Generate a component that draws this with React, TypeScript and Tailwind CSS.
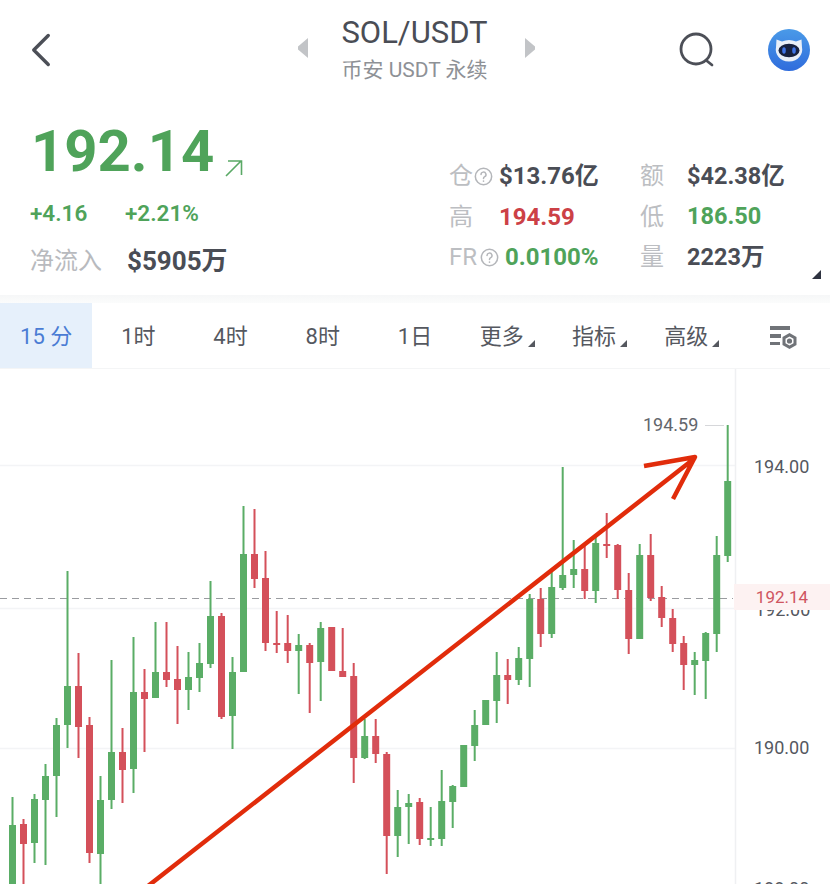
import { ChevronLeft } from "lucide-react";

type Candle = [number, number, number, number, number, "g" | "r"];

// x, wick top, wick bottom, body top, body bottom, colour (page coordinates)
const candles: Candle[] = [
  [12.5, 797, 890, 825, 890, "g"],
  [23.5, 819, 890, 824, 844, "r"],
  [34.5, 794, 863, 799, 843, "g"],
  [45.5, 764, 865, 776, 800, "g"],
  [56.5, 718, 817, 725, 776, "g"],
  [67.5, 571, 748, 686, 725, "g"],
  [78.5, 653, 758, 686, 727, "r"],
  [89.5, 717, 863, 725, 853, "r"],
  [100.5, 776, 890, 800, 854, "g"],
  [111.5, 660, 809, 752, 800, "g"],
  [122.5, 728, 803, 752, 770, "r"],
  [133.5, 637, 793, 692, 769, "g"],
  [144.5, 669, 752, 692, 699, "r"],
  [155.5, 622, 698, 672, 698, "g"],
  [166.5, 622, 687, 672, 680, "r"],
  [177.5, 646, 724, 679, 690, "r"],
  [188.5, 652, 710, 677, 690, "g"],
  [199.5, 643, 692, 663, 678, "g"],
  [210.5, 581, 668, 616, 664, "g"],
  [221.5, 613, 719, 616, 717, "r"],
  [232.5, 657, 749, 672, 716, "g"],
  [243.5, 506, 672, 554, 672, "g"],
  [254.5, 509, 588, 554, 579, "r"],
  [265.5, 551, 651, 578, 643, "r"],
  [276.7, 611, 653, 643, 645, "r"],
  [287.7, 615, 663, 643, 651, "r"],
  [298.7, 634, 694, 645, 651, "g"],
  [309.7, 643, 713, 645, 663, "r"],
  [320.7, 622, 701, 628, 662, "g"],
  [331.7, 627, 671, 627, 671, "r"],
  [342.7, 628, 677, 671, 677, "r"],
  [353.7, 663, 783, 676, 758, "r"],
  [364.7, 719, 759, 736, 758, "g"],
  [375.7, 719, 763, 736, 754, "r"],
  [386.7, 752, 874, 754, 836, "r"],
  [397.7, 790, 857, 807, 836, "g"],
  [408.7, 794, 844, 803, 807, "g"],
  [419.7, 798, 845, 802, 839, "r"],
  [430.7, 807, 846, 838, 840, "g"],
  [441.7, 770, 846, 801, 839, "g"],
  [452.7, 785, 828, 786, 802, "g"],
  [463.7, 745, 787, 745, 787, "g"],
  [474.7, 710, 761, 725, 746, "g"],
  [485.7, 700, 725, 700, 725, "g"],
  [496.7, 652, 723, 675, 701, "g"],
  [507.7, 659, 704, 675, 680, "r"],
  [518.7, 647, 685, 658, 680, "g"],
  [529.7, 594, 687, 599, 659, "g"],
  [540.7, 588, 647, 599, 634, "r"],
  [551.7, 572, 638, 587, 634, "g"],
  [562.7, 467, 590, 575, 588, "g"],
  [573.7, 540, 588, 569, 575, "g"],
  [584.7, 543, 599, 569, 591, "r"],
  [595.7, 537, 603, 543, 591, "g"],
  [606.7, 513, 558, 544, 546, "r"],
  [617.7, 544, 599, 545, 590, "r"],
  [628.7, 573, 654, 590, 639, "r"],
  [639.7, 544, 639, 555, 639, "g"],
  [650.7, 534, 601, 555, 598, "r"],
  [661.7, 586, 627, 597, 618, "r"],
  [672.7, 609, 652, 618, 644, "r"],
  [683.7, 636, 690, 643, 665, "r"],
  [694.7, 652, 695, 660, 665, "g"],
  [705.7, 632, 699, 633, 661, "g"],
  [716.7, 536, 652, 555, 634, "g"],
  [727.7, 425, 562, 481, 556, "g"],
];

const candleColors = { g: "#5aad66", r: "#d4505a" };

function HelpDot({ className }: { className?: string }) {
  return (
    <svg viewBox="0 0 20 20" className={className} fill="none" stroke="#b4b6ba" strokeWidth="1.6">
      <circle cx="10" cy="10" r="8.6" />
      <path d="M7.4 8a2.6 2.6 0 1 1 3.9 2.2c-.9.5-1.3 1-1.3 2" strokeLinecap="round" />
      <circle cx="10" cy="14.8" r=".9" fill="#b4b6ba" stroke="none" />
    </svg>
  );
}

function CornerTriangle({ className }: { className?: string }) {
  return (
    <svg viewBox="0 0 8 8" className={className}>
      <path d="M8 0v8H0z" fill="currentColor" />
    </svg>
  );
}

function StatRow({
  label,
  helpClass,
  value,
  valueClass,
  indent,
}: {
  label: string;
  helpClass?: string;
  value: string;
  valueClass: string;
  indent: string;
}) {
  return (
    <div className="flex h-[40.5px] items-center">
      <div className={`flex shrink-0 items-center ${indent}`}>
        <span className="text-[24px] leading-none text-[#bcbec2]">{label}</span>
        {helpClass && <HelpDot className={`h-[19px] w-[19px] ${helpClass}`} />}
      </div>
      <span className={`font-bold leading-none whitespace-nowrap ${valueClass}`}>{value}</span>
    </div>
  );
}

function ChartSvg() {
  return (
    <svg viewBox="0 369 830 515" className="block h-[515px] w-[830px]">
      <path d="M0 465.5H735M0 608.5H735M0 748.5H735" stroke="#f3f4f6" strokeWidth="1.5" />
      <path d="M735.5 369V884" stroke="#eff0f2" strokeWidth="1.5" />
      <path d="M0 598.5H733" stroke="#9a9ca0" strokeWidth="1" strokeDasharray="7 5" />
      <path d="M705 425.5H724" stroke="#d6d7da" strokeWidth="1" />
      {candles.map(([x, wickTop, wickBottom, bodyTop, bodyBottom, tone]) => (
        <g key={x} fill={candleColors[tone]}>
          <rect x={x - 1} y={wickTop} width="2" height={wickBottom - wickTop} />
          <rect x={x - 3.5} y={bodyTop} width="7" height={Math.max(bodyBottom - bodyTop, 2)} />
        </g>
      ))}
      <path
        d="M148 886 695 458M644 466 695 457 673 499"
        fill="none"
        stroke="#e12c0b"
        strokeWidth="4.5"
        strokeLinejoin="round"
      />
    </svg>
  );
}

const ranges = ["15 分", "1时", "4时", "8时", "1日"];
const menus = ["更多", "指标", "高级"];

export default function App() {
  return (
    <div className="h-[884px] w-[830px] overflow-hidden bg-white font-['Roboto','Noto_Sans_CJK_SC',sans-serif]">
      <header className="flex h-[100px] items-center px-[24px]">
        <div className="w-[270px]">
          <ChevronLeft size={58} strokeWidth={1.4} className="-ml-[12px] text-[#4c4f57]" />
        </div>
        <div className="flex flex-1 items-start justify-center pr-[2px] pb-[3px]">
          <svg viewBox="0 0 12 20" className="mt-[23px] h-[20px] w-[12px] text-[#c2c4c7]">
            <path d="M11 0v20L1 11.5v-3z" fill="currentColor" />
          </svg>
          <div className="mr-[34px] ml-[31px] flex w-[150px] flex-col items-center whitespace-nowrap">
            <span className="text-[31px] leading-[36px] text-[#4a4d55]">SOL/USDT</span>
            <span className="mt-[6px] text-[21px] leading-[26px] text-[#8e9196]">币安 USDT 永续</span>
          </div>
          <svg viewBox="0 0 12 20" className="mt-[23px] h-[20px] w-[12px] text-[#c2c4c7]">
            <path d="M1 0v20l10-8.5v-3z" fill="currentColor" />
          </svg>
        </div>
        <div className="-mr-[4px] flex w-[270px] items-center justify-end gap-[53px]">
          <svg viewBox="0 0 36 36" className="h-[36px] w-[36px]" fill="none" stroke="#4c4f57" strokeWidth="2.8">
            <circle cx="17" cy="17" r="15" />
            <path d="m28 29 5 4" strokeLinecap="round" />
          </svg>
          <svg viewBox="0 0 42 42" className="h-[42px] w-[42px]">
            <defs>
              <linearGradient id="avatar" x1="0" y1="0" x2="0" y2="1">
                <stop offset="0" stopColor="#4a9ae8" />
                <stop offset="1" stopColor="#2f6cdc" />
              </linearGradient>
            </defs>
            <circle cx="21" cy="21" r="21" fill="url(#avatar)" />
            <path
              d="M8.500 10.500 14 12.500a17 17 0 0 1 14 0l5.500-2 .5 8c1.500 6-3.500 14-13 14S6.500 24.500 8 18.500z"
              fill="#e9eff8"
            />
            <ellipse cx="21" cy="21.500" rx="10.500" ry="6.800" fill="#17213f" />
            <ellipse cx="16" cy="21.500" rx="1.800" ry="3.200" fill="#3f74e6" />
            <ellipse cx="26" cy="21.500" rx="1.800" ry="3.200" fill="#3f74e6" />
          </svg>
        </div>
      </header>

      <section className="relative flex h-[195px] pl-[30px]">
        <div className="w-[419px]">
          <div className="mt-[19px] flex items-end">
            <span className="pl-[1px] text-[58px] font-bold leading-[64px] text-[#4fa35a]">192.14</span>
            <svg viewBox="0 0 18 18" className="mb-[6px] ml-[11px] h-[18px] w-[18px]" fill="none" stroke="#5aa966" strokeWidth="1.600">
              <path d="M1 17 16 2M3 2h13.500v14" />
            </svg>
          </div>
          <div className="mt-[16px] flex h-[28px] items-center text-[22.5px] font-semibold leading-none text-[#4fa35a]">
            <span className="w-[95px]">+4.16</span>
            <span>+2.21%</span>
          </div>
          <div className="mt-[21px] flex items-center">
            <span className="w-[97px] text-[24px] leading-none text-[#b8babe]">净流入</span>
            <span className="text-[26px] font-bold leading-none text-[#4a4d55]">$5905万</span>
          </div>
        </div>
        <div className="mt-[56px] w-[191px] text-[24px]">
          <StatRow label="仓" helpClass="ml-[1px]" value="$13.76亿" valueClass="text-[#4a4d55]" indent="w-[50px]" />
          <StatRow label="高" value="194.59" valueClass="text-[#cc4146]" indent="w-[50px]" />
          <StatRow label="FR" helpClass="ml-[3px]" value="0.0100%" valueClass="text-[#4fa35a]" indent="w-[56px]" />
        </div>
        <div className="mt-[56px] w-[190px] text-[23.5px]">
          <StatRow label="额" value="$42.38亿" valueClass="text-[#4a4d55]" indent="w-[47px]" />
          <StatRow label="低" value="186.50" valueClass="text-[#4fa35a]" indent="w-[47px]" />
          <StatRow label="量" value="2223万" valueClass="text-[#4a4d55]" indent="w-[47px]" />
        </div>
        <CornerTriangle className="absolute right-[9px] bottom-[16px] h-[9px] w-[9px] text-[#2f3340]" />
      </section>

      <div className="h-[8px] bg-gradient-to-b from-[#f6f7f8] to-[#fbfcfc]" />

      <nav className="grid h-[66px] grid-cols-9 border-b border-[#f4f5f6] text-[22px] leading-none text-[#55585f]">
        {ranges.map((range, index) => (
          <div
            key={range}
            className={`flex items-center justify-center pt-[2px] ${index === 0 ? "bg-[#e6f0fb] text-[#4a7cd4]" : ""}`}
          >
            {range}
          </div>
        ))}
        {menus.map((menu) => (
          <div key={menu} className="flex items-center justify-center pt-[2px]">
            <span>{menu}</span>
            <CornerTriangle className="mt-[13px] ml-[4px] h-[7px] w-[7px] text-[#55585f]" />
          </div>
        ))}
        <div className="flex items-center justify-center pt-[3px]">
          <svg viewBox="0 0 28 23" className="h-[23px] w-[28px]" fill="#707378">
            <path d="M0 0h20v4H0zM0 8h11v4H0zM0 16h10v3H0z" />
            <path
              fillRule="evenodd"
              d="m19.500 7 7 4v8l-7 4-7-4v-8zm0 3.500-4 2.300v4.400l4 2.300 4-2.300v-4.400zm0 1.900a2.600 2.600 0 1 1 0 5.200 2.600 2.600 0 0 1 0-5.200z"
            />
          </svg>
        </div>
      </nav>

      <div className="relative h-[515px]">
        <ChartSvg />
        <span className="absolute top-[45px] left-[643px] text-[18px] leading-[22px] text-[#63666c]">194.59</span>
        <span className="absolute top-[86px] left-[754px] text-[18px] leading-[24px] text-[#55585f]">194.00</span>
        <span className="absolute top-[229px] left-[755px] text-[18px] leading-[24px] text-[#55585f]">192.00</span>
        <span className="absolute top-[215px] left-[734px] flex h-[26px] w-[96px] items-center justify-center bg-[#fdf2f2] pt-[1px] text-[17px] leading-none text-[#cf5560]">
          192.14
        </span>
        <span className="absolute top-[367px] left-[754px] text-[18px] leading-[24px] text-[#55585f]">190.00</span>
        <span className="absolute top-[508px] left-[754px] text-[18px] leading-[24px] text-[#55585f]">188.00</span>
      </div>
    </div>
  );
}
